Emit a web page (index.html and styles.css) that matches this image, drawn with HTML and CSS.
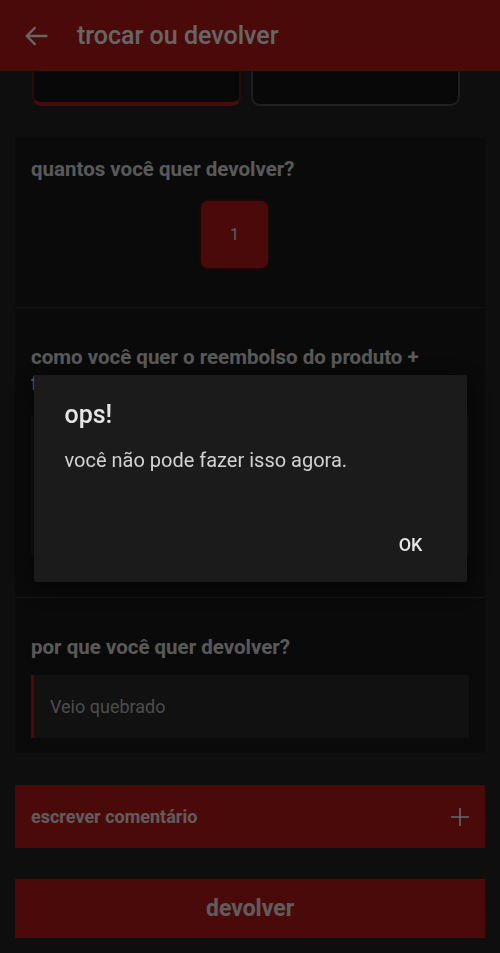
FILE: index.html
```html
<!DOCTYPE html>
<html lang="pt-BR">
<head>
    <meta charset="UTF-8">
    <meta name="viewport" content="width=device-width, initial-scale=1.0">
    <title>trocar ou devolver</title>
    <link rel="stylesheet" href="styles.css">
</head>
<body>

    <!-- app bar start -->
    <header class="app-bar">
        <svg class="back-icon" viewBox="0 0 24 24" width="28" height="28">
            <path d="M21 12H4M11 5l-7 7 7 7" fill="none" stroke="#fff" stroke-width="2" stroke-linecap="round" stroke-linejoin="round"/>
        </svg>
        <h1 class="app-title">trocar ou devolver</h1>
    </header>
    <!-- app bar end -->

    <main class="page">

        <div class="type-cards">
            <div class="type-card selected"></div>
            <div class="type-card"></div>
        </div>

        <div class="form-box">
            <section class="form-section">
                <h2 class="section-title">quantos você quer devolver?</h2>
                <div class="qty-row">
                    <div class="qty-item">1</div>
                </div>
            </section>

            <section class="form-section refund">
                <h2 class="section-title">como você quer o reembolso do produto + frete?</h2>
                <div class="option-card"></div>
            </section>

            <section class="form-section reason">
                <h2 class="section-title">por que você quer devolver?</h2>
                <div class="select-box">Veio quebrado</div>
            </section>
        </div>

        <div class="comment-bar">
            <span>escrever comentário</span>
            <svg viewBox="0 0 20 20" width="20" height="20">
                <path d="M10 1v18M1 10h18" stroke="#fff" stroke-width="1.6" fill="none"/>
            </svg>
        </div>

        <button class="submit-btn">devolver</button>
    </main>

    <!-- dialog start -->
    <div class="overlay">
        <div class="dialog">
            <h3 class="dialog-title">ops!</h3>
            <p class="dialog-text">você não pode fazer isso agora.</p>
            <div class="dialog-actions">
                <button class="dialog-btn">OK</button>
            </div>
        </div>
    </div>
    <!-- dialog end -->

</body>
</html>
```

FILE: styles.css
```css
body {
    margin: 0;
    padding: 0;
    height: 953px;
    overflow: hidden;
    background-color: #232323;
    font-family: Roboto, "Noto Sans", Arial, sans-serif;
}

/* app bar */
.app-bar {
    position: fixed;
    top: 0;
    left: 0;
    right: 0;
    height: 71px;
    background-color: #bb1919;
    display: flex;
    align-items: center;
    z-index: 2;
}

.back-icon {
    margin-left: 22px;
}

.app-title {
    margin: 0 0 0 27px;
    font-size: 25px;
    font-weight: 500;
    color: #fff;
}

.page {
    padding-top: 36px;
}

/* top cards, scrolled under the bar */
.type-cards {
    display: flex;
    gap: 10px;
    padding-left: 32px;
}

.type-card {
    width: 209px;
    height: 70px;
    box-sizing: border-box;
    border: 2px solid #4e4e4e;
    border-radius: 9px;
    background-color: #141414;
}

.type-card.selected {
    border-color: #5a2020;
    border-bottom: 4px solid #bb1919;
}

/* form box */
.form-box {
    margin: 32px 15px 0;
    background-color: #191919;
}

.form-section {
    padding: 18px 16px 39px;
    border-bottom: 1px solid #343434;
}

.section-title {
    margin: 0;
    padding-right: 30px;
    font-size: 20.5px;
    line-height: 26px;
    font-weight: 700;
    color: #dedede;
}

.qty-row {
    display: flex;
    margin-top: 19px;
    padding-left: 170px;
}

.qty-item {
    width: 67px;
    height: 67px;
    border-radius: 7px;
    background-color: #bb1919;
    box-shadow: 0 0 4px rgba(187, 25, 25, 0.6);
    color: #e8e8e8;
    font-size: 16px;
    display: flex;
    align-items: center;
    justify-content: center;
}

.form-section.refund {
    padding: 36px 16px 42px;
}

.option-card {
    margin-top: 19px;
    height: 140px;
    background-color: #2b2b2b;
}

.form-section.reason {
    padding: 36px 16px 15px;
    border-bottom: none;
}

.select-box {
    margin-top: 15px;
    height: 63px;
    box-sizing: border-box;
    background-color: #2b2b2b;
    border-left: 3px solid #bb1919;
    padding-left: 16px;
    display: flex;
    align-items: center;
    font-size: 18px;
    color: #bdbdbd;
}

.comment-bar {
    margin: 32px 15px 0;
    height: 63px;
    background-color: #bb1919;
    display: flex;
    align-items: center;
    justify-content: space-between;
    padding: 0 15px 0 16px;
    font-size: 18px;
    font-weight: 700;
    color: #f0e6e6;
}

.submit-btn {
    display: block;
    margin: 31px 15px 0;
    width: 470px;
    height: 59px;
    border: none;
    background-color: #bb1919;
    color: #f0e6e6;
    font-family: inherit;
    font-size: 23px;
    font-weight: 700;
}

/* dialog */
.overlay {
    position: fixed;
    top: 0;
    left: 0;
    right: 0;
    bottom: 0;
    background-color: rgba(0, 0, 0, 0.6);
    display: flex;
    align-items: center;
    justify-content: center;
    z-index: 10;
}

.dialog {
    width: 433px;
    box-sizing: border-box;
    margin-top: 4px;
    background-color: #1b1b1b;
    border-radius: 2px;
    padding: 24px 32px 20px 31px;
    box-shadow: 0 6px 24px rgba(0, 0, 0, 0.6);
}

.dialog-title {
    margin: 0;
    font-size: 25px;
    line-height: 32px;
    font-weight: 500;
    color: #e6e6e6;
}

.dialog-text {
    margin: 16px 0 0;
    font-size: 20px;
    line-height: 26px;
    color: #d2d2d2;
}

.dialog-actions {
    display: flex;
    justify-content: flex-end;
    margin-top: 53px;
}

.dialog-btn {
    height: 36px;
    padding: 0 12px;
    border: none;
    background: transparent;
    font-family: inherit;
    font-size: 18px;
    font-weight: 500;
    color: #e6e6e6;
}
```
